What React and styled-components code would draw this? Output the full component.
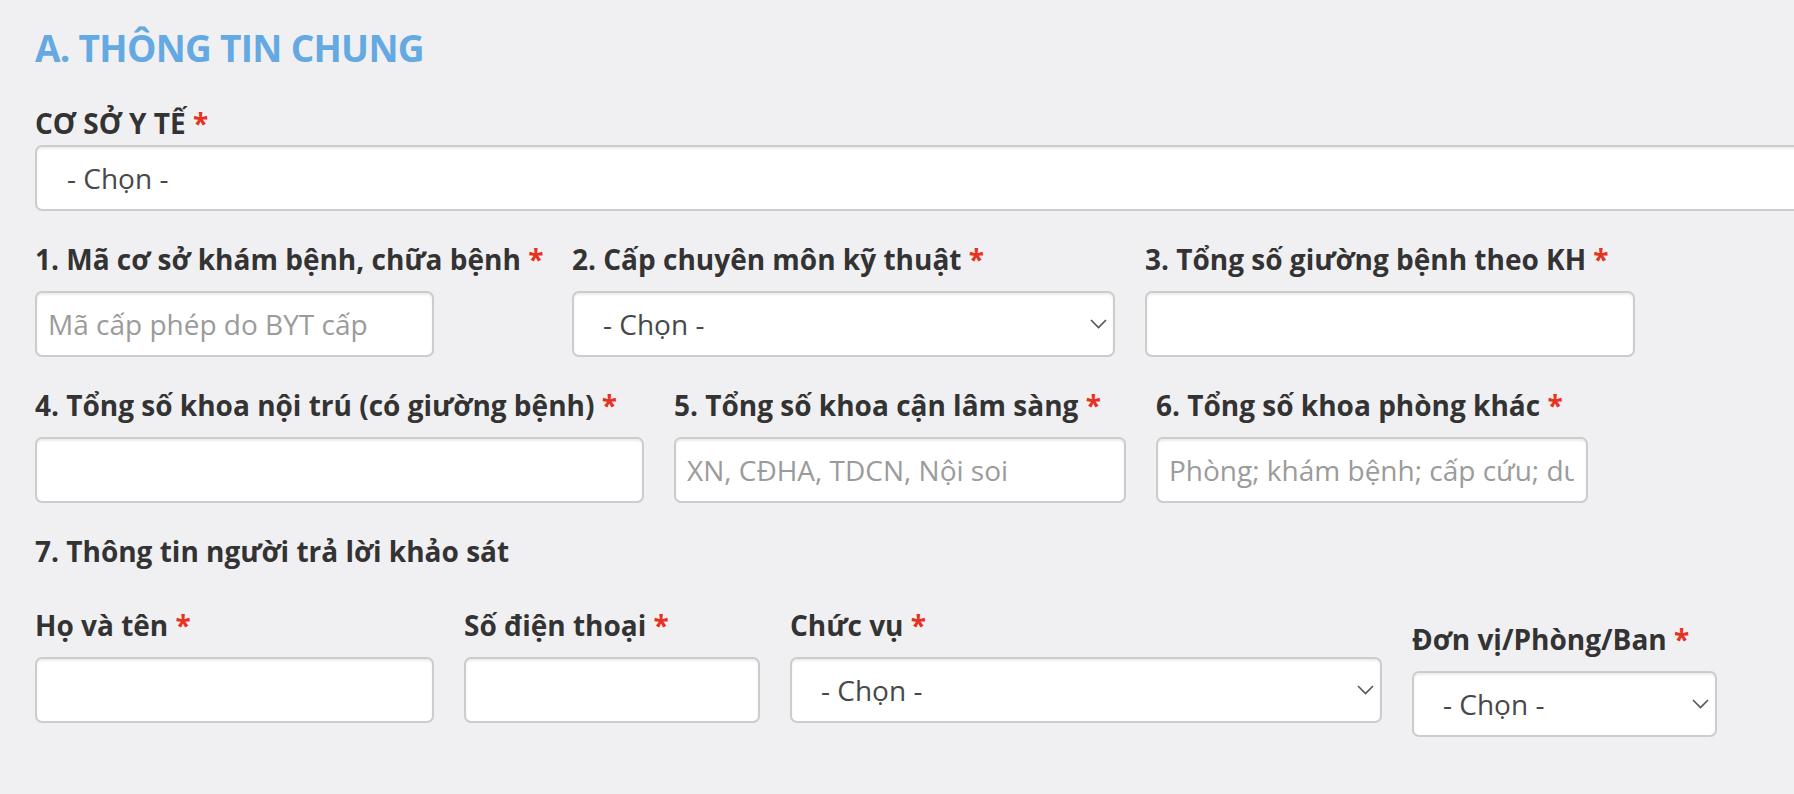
import React from "react";
import styled, { createGlobalStyle } from "styled-components";

const Global = createGlobalStyle`
  html, body {
    margin: 0;
    padding: 0;
    background: #f0f0f2;
    overflow: hidden;
  }
  body {
    font-family: "Open Sans", "Noto Sans", sans-serif;
    color: #333;
  }
  * { box-sizing: border-box; }
`;

const Page = styled.div`
  width: 1794px;
  height: 794px;
  padding: 25px 0 0 35px;
  background: #f0f0f2;
  overflow: hidden;
`;

const Heading = styled.h2`
  margin: 0 0 32px;
  font-size: 37px;
  line-height: 46px;
  font-weight: 700;
  letter-spacing: -0.7px;
  color: #65a9e2;
  white-space: nowrap;
`;

const Label = styled.div`
  font-size: 28px;
  line-height: 40px;
  font-weight: 700;
  color: #333;
  white-space: nowrap;
  margin-bottom: ${(p) => p.$mb ?? 12}px;
`;

const Req = styled.span`
  color: #e8311f;
`;

const TopField = styled.div`
  display: flex;
  flex-direction: column;
`;

const Row = styled.div`
  display: flex;
  align-items: flex-start;
  gap: 30px;
  margin-top: ${(p) => p.$mt ?? 28}px;
`;

const Field = styled.div`
  display: flex;
  flex-direction: column;
  flex: none;
  width: ${(p) => p.$w}px;
  margin-top: ${(p) => p.$offset ?? 0}px;
`;

const controlBase = `
  display: block;
  height: 66px;
  border: 2px solid #cccccc;
  border-radius: 7px;
  background: #fff;
  box-shadow: inset 0 2px 2px rgba(0, 0, 0, 0.075);
  font-family: "Open Sans", "Noto Sans", sans-serif;
  font-size: 28px;
  color: #555;
  outline: none;
  margin: 0;
`;

const TextInput = styled.input`
  ${controlBase}
  width: ${(p) => (p.$cw ? `${p.$cw}px` : "100%")};
  padding: 0 12px 0 11px;
  &::placeholder {
    color: #9b9b9b;
    opacity: 1;
  }
`;

const SelectWrap = styled.div`
  position: relative;
  width: ${(p) => (p.$cw ? `${p.$cw}px` : "100%")};
`;

const NativeSelect = styled.select`
  ${controlBase}
  width: 100%;
  padding: 0 40px 0 ${(p) => p.$pl ?? 29}px;
  appearance: none;
  -webkit-appearance: none;
  color: #484848;
`;

const Chevron = styled.svg`
  position: absolute;
  right: 8px;
  top: 50%;
  width: 17px;
  height: 10px;
  margin-top: -5px;
  pointer-events: none;
`;

const SubTitle = styled.div`
  margin-top: 28px;
  font-size: 28px;
  line-height: 40px;
  font-weight: 700;
  color: #333;
  white-space: nowrap;
`;

function Select({ cw, arrow = true, pl }) {
  return (
    <SelectWrap $cw={cw}>
      <NativeSelect defaultValue="" $pl={pl}>
        <option value="">- Chọn -</option>
      </NativeSelect>
      {arrow && (
        <Chevron viewBox="0 0 17 10">
          <polyline
            points="1,1 8.5,8.5 16,1"
            fill="none"
            stroke="#555"
            strokeWidth="1.6"
          />
        </Chevron>
      )}
    </SelectWrap>
  );
}

function LabelText({ children, req = true, mb }) {
  return (
    <Label $mb={mb}>
      {children}
      {req && (
        <>
          {" "}
          <Req>*</Req>
        </>
      )}
    </Label>
  );
}

export default function App() {
  return (
    <>
      <Global />
      <Page>
        <Heading>A. THÔNG TIN CHUNG</Heading>

        <TopField>
          <LabelText mb={2}>CƠ SỞ Y TẾ</LabelText>
          <Select cw={1820} arrow={false} pl={30} />
        </TopField>

        <Row>
          <Field $w={507}>
            <LabelText>1. Mã cơ sở khám bệnh, chữa bệnh</LabelText>
            <TextInput $cw={399} placeholder="Mã cấp phép do BYT cấp" />
          </Field>
          <Field $w={543}>
            <LabelText>2. Cấp chuyên môn kỹ thuật</LabelText>
            <Select />
          </Field>
          <Field $w={490}>
            <LabelText>3. Tổng số giường bệnh theo KH</LabelText>
            <TextInput />
          </Field>
        </Row>

        <Row>
          <Field $w={609}>
            <LabelText>4. Tổng số khoa nội trú (có giường bệnh)</LabelText>
            <TextInput />
          </Field>
          <Field $w={452}>
            <LabelText>5. Tổng số khoa cận lâm sàng</LabelText>
            <TextInput placeholder="XN, CĐHA, TDCN, Nội soi" />
          </Field>
          <Field $w={432}>
            <LabelText>6. Tổng số khoa phòng khác</LabelText>
            <TextInput placeholder="Phòng; khám bệnh; cấp cứu; dược; dinh dưỡng" />
          </Field>
        </Row>

        <SubTitle>7. Thông tin người trả lời khảo sát</SubTitle>

        <Row $mt={34}>
          <Field $w={399}>
            <LabelText>Họ và tên</LabelText>
            <TextInput />
          </Field>
          <Field $w={296}>
            <LabelText>Số điện thoại</LabelText>
            <TextInput />
          </Field>
          <Field $w={592}>
            <LabelText>Chức vụ</LabelText>
            <Select />
          </Field>
          <Field $w={305} $offset={14}>
            <LabelText>Đơn vị/Phòng/Ban</LabelText>
            <Select />
          </Field>
        </Row>
      </Page>
    </>
  );
}
